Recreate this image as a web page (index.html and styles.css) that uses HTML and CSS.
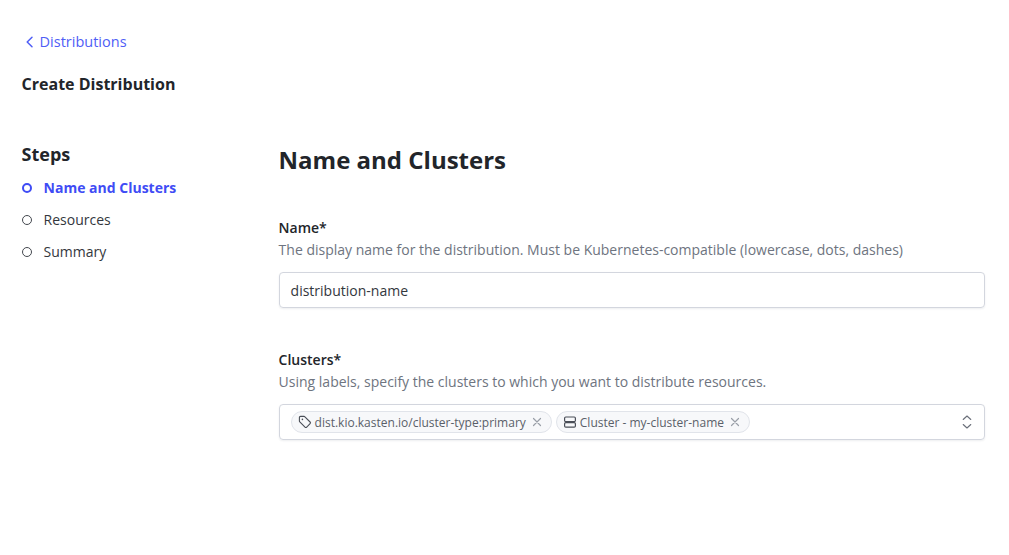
FILE: index.html
```html
<!DOCTYPE html>
<html lang="en">
<head>
<meta charset="utf-8">
<title>Create Distribution</title>
<link rel="stylesheet" href="styles.css">
</head>
<body>
<div class="page">
  <header class="top">
    <a class="back" href="#">
      <svg class="back-icon" width="16" height="16" viewBox="0 0 16 16"><path d="M10 3.2 5.2 8l4.8 4.8" fill="none" stroke="currentColor" stroke-width="1.5" stroke-linecap="round" stroke-linejoin="round"/></svg>
      <span>Distributions</span>
    </a>
    <h1 class="page-title">Create Distribution</h1>
  </header>
  <div class="columns">
    <nav class="steps">
      <h2 class="steps-title">Steps</h2>
      <ul class="step-list">
        <li class="step active"><span class="dot"></span>Name and Clusters</li>
        <li class="step"><span class="dot"></span>Resources</li>
        <li class="step"><span class="dot"></span>Summary</li>
      </ul>
    </nav>
    <main class="main">
      <h2 class="main-title">Name and Clusters</h2>
      <section class="field">
        <div class="label">Name*</div>
        <div class="help">The display name for the distribution. Must be Kubernetes-compatible (lowercase, dots, dashes)</div>
        <div class="box input">distribution-name</div>
      </section>
      <section class="field">
        <div class="label">Clusters*</div>
        <div class="help">Using labels, specify the clusters to which you want to distribute resources.</div>
        <div class="box select">
          <span class="chip">
            <svg class="chip-icon" width="14" height="14" viewBox="0 0 14 14"><path d="M1.4 2.6c0-.7.5-1.2 1.2-1.2h3.4c.3 0 .6.1.9.4l5.2 5.2c.5.5.5 1.2 0 1.7l-3.4 3.4c-.5.5-1.2.5-1.7 0L1.8 6.9c-.3-.3-.4-.6-.4-.9z" fill="none" stroke="currentColor" stroke-width="1.1" stroke-linejoin="round"/><circle cx="4.4" cy="4.4" r=".8" fill="currentColor"/></svg>
            <span>dist.kio.kasten.io/cluster-type:primary</span>
            <svg class="chip-x" width="12" height="12" viewBox="0 0 12 12"><path d="m2.5 2.5 7 7m0-7-7 7" fill="none" stroke="currentColor" stroke-width="1.2" stroke-linecap="round"/></svg>
          </span>
          <span class="chip">
            <svg class="chip-icon" width="14" height="14" viewBox="0 0 14 14"><rect x="1.6" y="2" width="10.8" height="4.6" rx="1.2" fill="none" stroke="currentColor" stroke-width="1.2"/><rect x="1.6" y="7.6" width="10.8" height="4.6" rx="1.2" fill="none" stroke="currentColor" stroke-width="1.2"/></svg>
            <span>Cluster - my-cluster-name</span>
            <svg class="chip-x" width="12" height="12" viewBox="0 0 12 12"><path d="m2.5 2.5 7 7m0-7-7 7" fill="none" stroke="currentColor" stroke-width="1.2" stroke-linecap="round"/></svg>
          </span>
          <svg class="updown" width="12" height="16" viewBox="0 0 12 16"><path d="M2.2 5.5 6 2l3.8 3.5M2.2 10.5 6 14l3.8-3.5" fill="none" stroke="currentColor" stroke-width="1.1" stroke-linecap="round" stroke-linejoin="round"/></svg>
        </div>
      </section>
    </main>
  </div>
</div>
</body>
</html>
```
FILE: styles.css
```css
* { box-sizing: border-box; }
html, body { margin: 0; padding: 0; background: #fff; }
body { font-family: "Open Sans", sans-serif; color: #22252a; font-size: 14px; }
.page { padding: 32px 24px 0 21.6px; height: 555px; overflow: hidden; }
.top { display: flex; flex-direction: column; align-items: flex-start; }
.back { display: flex; align-items: center; gap: 2px; color: #4f5ef6; text-decoration: none; font-size: 14.5px; line-height: 20px; font-weight: 500; }
.back-icon { display: block; }
.page-title { margin: 20px 0 0; font-size: 16px; line-height: 24px; font-weight: 700; }
.columns { display: flex; margin-top: 44px; }
.steps { width: 257px; flex: none; padding-top: 2px; }
.steps-title { margin: 0; font-size: 18px; line-height: 24px; font-weight: 700; }
.step-list { list-style: none; margin: 12px 0 0; padding: 0; display: flex; flex-direction: column; gap: 12px; }
.step { display: flex; align-items: center; gap: 12px; height: 20px; line-height: 20px; color: #33373d; }
.dot { width: 10px; height: 10px; border-radius: 50%; border: 1px solid #44484f; flex: none; }
.step.active { color: #3f4cf5; font-weight: 700; }
.step.active .dot { border: 2px solid #3f4cf5; }
.main { flex: 1; min-width: 0; padding-top: 4px; }
.main-title { margin: 0; font-size: 24px; line-height: 32px; font-weight: 700; }
.field { margin-top: 42px; }
.field + .field { margin-top: 42px; }
.label { font-size: 14px; line-height: 20px; font-weight: 600; }
.help { font-size: 14px; line-height: 20px; color: #6e7480; margin-top: 2px; }
.box { height: 36px; margin-top: 12px; border: 1px solid #d3d6de; border-radius: 4px; box-shadow: 0 1px 2px rgba(30, 35, 60, .08); display: flex; align-items: center; }
.input { padding: 0 11px; color: #33373d; }
.select { padding: 0 11px; gap: 4px; }
.chip { display: flex; align-items: center; height: 22px; border: 1px solid #e1e4ea; border-radius: 11px; background: #f7f8fa; padding: 0 8px 0 6px; color: #5a5f69; font-size: 12px; }
.chip-icon { margin-right: 3px; flex: none; color: #4a4e57; }
.chip-x { margin-left: 5px; flex: none; color: #9a9fa8; }
.updown { margin-left: auto; color: #6a6f79; flex: none; }
```
